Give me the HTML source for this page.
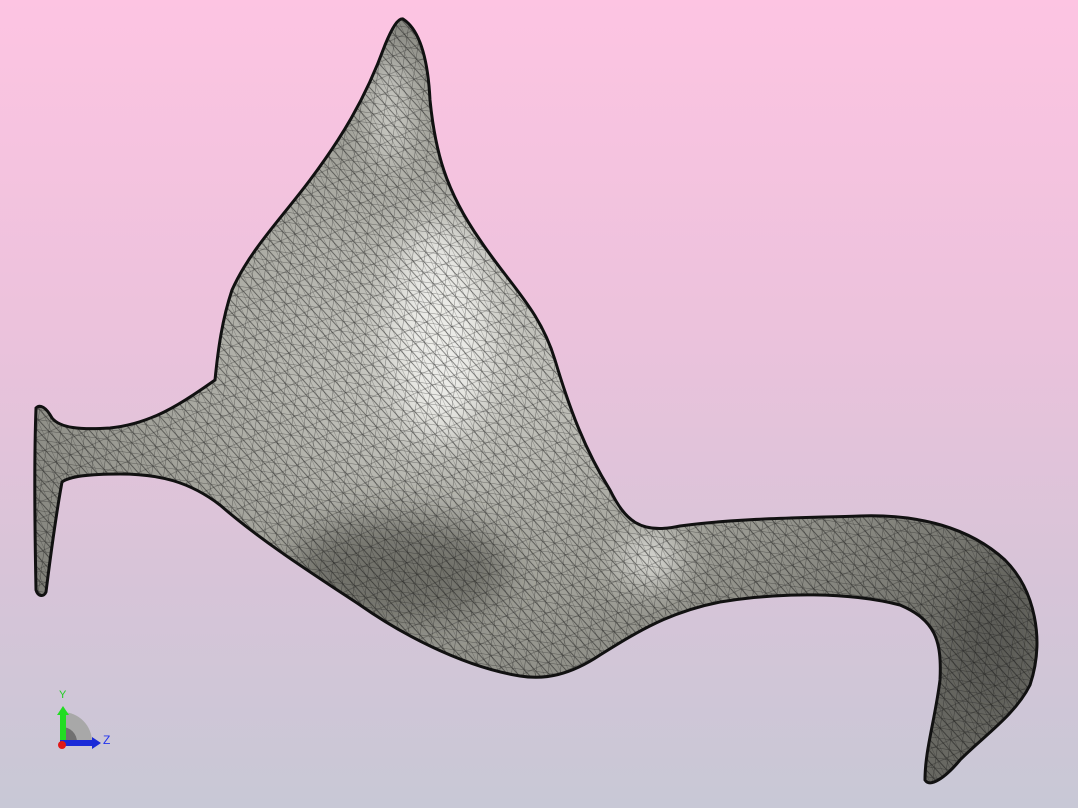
<!DOCTYPE html>
<html><head><meta charset="utf-8"><style>
html,body{margin:0;padding:0;width:1078px;height:808px;overflow:hidden}
body{background:linear-gradient(#fdc4e2 0%,#ecc2dc 40%,#d8c4d8 70%,#c8c8d6 100%);font-family:"Liberation Sans",sans-serif}
svg{position:absolute;left:0;top:0}
</style></head><body>
<svg width="1078" height="808" viewBox="0 0 1078 808">
<defs>
<radialGradient id="g" cx="0.42" cy="0.45" r="0.6">
<stop offset="0" stop-color="#d0d0ca"/>
<stop offset="0.5" stop-color="#a0a098"/>
<stop offset="1" stop-color="#686862"/>
</radialGradient>
<filter id="b"><feGaussianBlur stdDeviation="18"/></filter>
<pattern id="m1" width="12" height="10" patternUnits="userSpaceOnUse" patternTransform="rotate(8)">
<path d="M0 0H12M0 0V10M0 0L12 10" stroke="#111" stroke-width="0.8" fill="none"/>
</pattern>
<pattern id="m2" width="8" height="15" patternUnits="userSpaceOnUse" patternTransform="rotate(-25)">
<path d="M0 0V15M0 7H8" stroke="#111" stroke-width="0.6" fill="none"/>
</pattern>
<clipPath id="c"><path id="s" d="M403 19C420 30 428 60 430 100C435 150 445 190 480 240C510 285 540 310 555 360C570 410 585 450 610 490C625 520 640 535 680 526C740 518 800 518 860 516C920 514 970 528 1005 560C1035 590 1045 640 1030 685C1015 715 985 735 960 760C945 778 930 788 925 780C925 750 935 720 940 680C942 640 935 620 900 605C850 592 780 592 720 602C670 612 640 630 600 655C570 675 545 680 520 676C470 668 410 640 360 605C310 572 260 540 220 505C190 482 160 474 120 474C90 474 70 476 62 482C55 520 50 560 46 592C44 597 38 597 36 590C35 540 34 460 36 408C40 404 46 407 52 418C60 428 80 430 110 428C150 424 180 405 215 380C218 350 222 320 232 290C250 250 280 220 310 180C340 140 365 100 385 45C392 28 398 18 403 19Z"/></clipPath>
</defs>
<g clip-path="url(#c)">
<rect width="1078" height="808" fill="url(#g)"/>
<g filter="url(#b)">
<ellipse cx="440" cy="330" rx="50" ry="110" fill="#f4f4f0" opacity="0.8"/>
<ellipse cx="650" cy="560" rx="30" ry="25" fill="#f4f4f0" opacity="0.8"/>
<ellipse cx="390" cy="110" rx="15" ry="60" fill="#f0f0ec" opacity="0.8"/>
<ellipse cx="400" cy="570" rx="110" ry="55" fill="#50504a" opacity="0.6"/>
<ellipse cx="990" cy="640" rx="40" ry="70" fill="#50504a" opacity="0.5"/>
</g>
<rect width="1078" height="808" fill="url(#m1)" opacity="0.6"/>
<rect width="1078" height="808" fill="url(#m2)" opacity="0.5"/>
</g>
<use href="#s" fill="none" stroke="#111" stroke-width="3"/>
<g>
<path d="M62 712A30 30 0 0 1 92 742H62Z" fill="#a8a8a8"/>
<path d="M62 727A15 15 0 0 1 77 742H62Z" fill="#707070"/>
<path d="M60 742V715H57L63 706L69 715H66V742Z" fill="#22dd22"/>
<path d="M60 740H92V737L101 743L92 749V746H60Z" fill="#1a2ad8"/>
<circle cx="62" cy="745" r="4" fill="#e01818"/>
<text x="59" y="698" font-size="11" fill="#22cc22">Y</text>
<text x="103" y="744" font-size="12" fill="#2233ee">Z</text>
</g>
</svg>
</body></html>
